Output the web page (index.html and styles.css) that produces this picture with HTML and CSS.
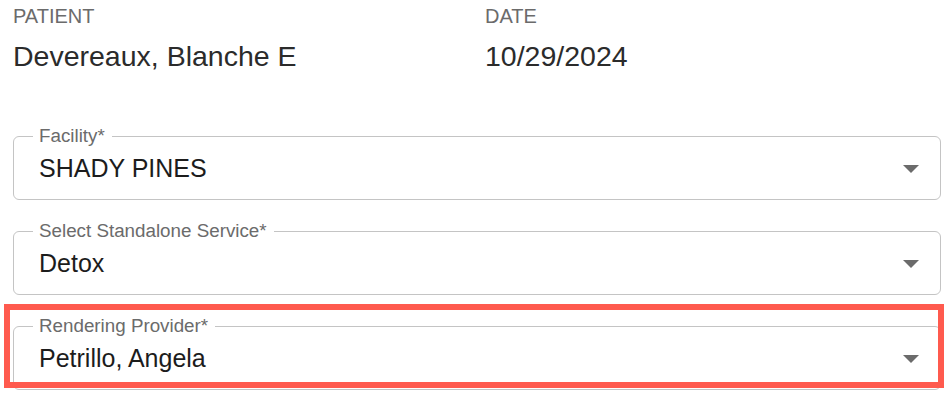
FILE: index.html
```html
<!DOCTYPE html>
<html lang="en">

<head>
    <meta charset="UTF-8">
    <meta name="viewport" content="width=device-width, initial-scale=1.0">
    <title>Standalone Service</title>
    <link rel="stylesheet" href="styles.css">
</head>

<body>
    <div class="page">
        <div class="summary">
            <div class="summary-item">
                <div class="summary-label">PATIENT</div>
                <div class="summary-value">Devereaux, Blanche E</div>
            </div>
            <div class="summary-item">
                <div class="summary-label">DATE</div>
                <div class="summary-value">10/29/2024</div>
            </div>
        </div>

        <div class="fields">
            <fieldset class="select-field">
                <legend>Facility*</legend>
                <div class="select-row">
                    <span class="select-value">SHADY PINES</span>
                    <svg class="arrow" viewBox="0 0 16 8">
                        <path d="M0 0h16L8 8z" />
                    </svg>
                </div>
            </fieldset>

            <fieldset class="select-field">
                <legend>Select Standalone Service*</legend>
                <div class="select-row">
                    <span class="select-value">Detox</span>
                    <svg class="arrow" viewBox="0 0 16 8">
                        <path d="M0 0h16L8 8z" />
                    </svg>
                </div>
            </fieldset>

            <div class="highlight-wrap">
                <fieldset class="select-field">
                    <legend>Rendering Provider*</legend>
                    <div class="select-row">
                        <span class="select-value">Petrillo, Angela</span>
                        <svg class="arrow" viewBox="0 0 16 8">
                            <path d="M0 0h16L8 8z" />
                        </svg>
                    </div>
                </fieldset>
                <div class="highlight"></div>
            </div>
        </div>
    </div>
</body>

</html>
```

FILE: styles.css
```css
body,
html {
    margin: 0;
    padding: 0;
    background-color: #fff;
    font-family: "Liberation Sans", Arial, Helvetica, sans-serif;
}

.page {
    padding: 4px 9px 0 13px;
}

.summary {
    display: grid;
    grid-template-columns: 472px 1fr;
}

.summary-label {
    font-size: 20px;
    line-height: 24px;
    color: #6b6b6b;
}

.summary-value {
    margin-top: 11px;
    font-size: 28.5px;
    line-height: 34px;
    color: #2b2b2b;
}

.fields {
    margin-top: 53px;
    display: flex;
    flex-direction: column;
    gap: 21px;
}

.select-field {
    margin: 0;
    min-width: 0;
    padding: 8px 21px 17px 25px;
    border: 1px solid #c4c4c4;
    border-radius: 6px;
}

.select-field legend {
    margin-left: -6px;
    padding: 0 7px 0 6px;
    font-size: 18.8px;
    line-height: 20px;
    color: #6b6b6b;
}

.select-row {
    display: flex;
    align-items: center;
    justify-content: space-between;
}

.select-value {
    font-size: 25px;
    line-height: 28px;
    color: #1c1c1c;
}

.arrow {
    width: 16px;
    height: 8px;
    margin-top: 1px;
    fill: #6b6b6b;
}

.highlight-wrap {
    position: relative;
}

.highlight {
    position: absolute;
    top: -12px;
    left: -9px;
    right: -3px;
    bottom: 2px;
    border: 6px solid #ff5a4e;
    pointer-events: none;
}
```
